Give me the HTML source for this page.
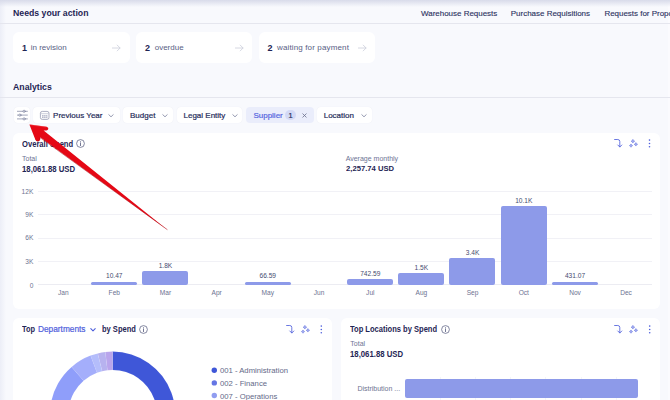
<!DOCTYPE html>
<html>
<head>
<meta charset="utf-8">
<title>Analytics</title>
<style>
*{box-sizing:border-box;margin:0;padding:0}
html,body{width:670px;height:400px;overflow:hidden}
body{position:relative;background:#f8f9fd;font-family:"Liberation Sans",sans-serif;color:#1f2554}
.a{position:absolute}
.t{position:absolute;white-space:nowrap;line-height:12px;height:12px}
.card{position:absolute;background:#fff;border-radius:6px}
.hd{font-weight:bold;font-size:9px;color:#1f2554}
.nav{font-size:8px;color:#2b3160;letter-spacing:-.02px;-webkit-text-stroke-width:.12px}
.num{font-weight:bold;font-size:9px;color:#1f2554}
.lbl{font-size:8px;color:#585e84}
.flt{position:absolute;top:107px;height:16px;background:#fff;border-radius:4px;box-shadow:0 0 1px rgba(60,70,130,.10)}
.ft{font-size:8px;color:#262c5a;top:109.5px;-webkit-text-stroke-width:.2px}
.ax{font-size:6.6px;color:#6d7391}
.vl{font-size:6.6px;color:#454b70}
.bar{position:absolute;background:#8d9ae9;border-radius:2px}
.gl{position:absolute;left:38px;width:613.5px;height:1px;background:#f1f1f6}
svg{position:absolute;overflow:visible}
</style>
</head>
<body>
<!-- edge shading -->
<div class="a" style="left:0;top:0;width:6px;height:400px;background:linear-gradient(90deg,#eceef7,#f8f9fd)"></div>
<div class="a" style="left:668px;top:0;width:2px;height:400px;background:#fbfbfe"></div>
<div class="a" style="left:0;top:0;width:670px;height:7px;background:linear-gradient(180deg,#d8dbea,rgba(248,249,253,0))"></div>

<!-- header -->
<div class="t hd" id="needs" style="left:13px;top:7.1px;font-size:9.4px;transform-origin:0 50%;transform:scaleX(.929)">Needs your action</div>
<div class="t nav" id="nav1" style="left:421px;top:7.9px">Warehouse Requests</div>
<div class="t nav" id="nav2" style="left:510.8px;top:7.9px">Purchase Requisitions</div>
<div class="t nav" id="nav3" style="left:604.4px;top:7.9px">Requests for Proposals</div>
<div class="a" style="left:0;top:23px;width:670px;height:1px;background:#e5e6ee"></div>

<!-- action cards -->
<div class="card" style="left:13px;top:32.4px;width:116.5px;height:30.8px"></div>
<div class="card" style="left:135.8px;top:32.4px;width:116.3px;height:30.8px"></div>
<div class="card" style="left:258.5px;top:32.4px;width:116.2px;height:30.8px"></div>
<div class="t num" id="n1" style="left:22px;top:41.7px">1</div>
<div class="t lbl" id="l1" style="left:30.7px;top:42.1px">in revision</div>
<div class="t num" id="n2" style="left:145px;top:41.7px">2</div>
<div class="t lbl" id="l2" style="left:154.7px;top:42.1px">overdue</div>
<div class="t num" id="n3" style="left:267.5px;top:41.7px">2</div>
<div class="t lbl" id="l3" style="left:277px;top:42.1px;letter-spacing:.14px">waiting for payment</div>
<svg style="left:112px;top:43.6px" width="10" height="8" viewBox="0 0 10 8"><path d="M0.4 4H8M5.2 1.1L8.1 4L5.2 6.9" fill="none" stroke="#cbcedb" stroke-width="0.8" stroke-linecap="round" stroke-linejoin="round"/></svg>
<svg style="left:234.5px;top:43.6px" width="10" height="8" viewBox="0 0 10 8"><path d="M0.4 4H8M5.2 1.1L8.1 4L5.2 6.9" fill="none" stroke="#cbcedb" stroke-width="0.8" stroke-linecap="round" stroke-linejoin="round"/></svg>
<svg style="left:357.8px;top:43.6px" width="10" height="8" viewBox="0 0 10 8"><path d="M0.4 4H8M5.2 1.1L8.1 4L5.2 6.9" fill="none" stroke="#cbcedb" stroke-width="0.8" stroke-linecap="round" stroke-linejoin="round"/></svg>

<!-- analytics -->
<div class="t hd" id="analytics" style="left:13.3px;top:81.4px;font-size:9.4px;transform-origin:0 50%;transform:scaleX(.931)">Analytics</div>
<div class="a" style="left:0;top:97px;width:670px;height:1px;background:#e5e6ee"></div>

<!-- filters -->
<div class="flt" style="left:13.5px;width:16.5px"></div>
<svg style="left:16.6px;top:110.2px" width="11" height="10" viewBox="0 0 11 10"><g fill="none" stroke="#7a7f9c" stroke-width="0.7" stroke-linecap="round"><path d="M0.4 1.3H5.9M8.3 1.3H10.4M0.4 5.1H1.7M4.1 5.1H10.4M0.4 8.9H5.9M8.3 8.9H10.4"/><circle cx="7.1" cy="1.3" r="1.1"/><circle cx="2.9" cy="5.1" r="1.1"/><circle cx="7.1" cy="8.9" r="1.1"/></g></svg>

<div class="flt" style="left:33px;width:86.5px"></div>
<svg style="left:40.2px;top:111px" width="9.4" height="8.8" viewBox="0 0 9.4 8.8"><rect x="0.4" y="0.4" width="8.6" height="8" rx="1.9" fill="#fff" stroke="#8f94ad" stroke-width="0.75"/><path d="M0.6 2.7H8.8" stroke="#b9bccd" stroke-width="0.7"/><path d="M2 4.1H7.4V7.1H2Z" fill="#b3b6c9"/><path d="M3.7 4V7.2M5.7 4V7.2M1.9 5.6H7.5" stroke="#fff" stroke-width="0.45"/></svg>
<div class="t ft" id="f1" style="left:53.1px">Previous Year</div>
<svg style="left:108px;top:114px" width="6" height="4" viewBox="0 0 6 4"><path d="M0.8 0.7L3 2.8L5.2 0.7" fill="none" stroke="#8a8fa8" stroke-width="0.9" stroke-linecap="round" stroke-linejoin="round"/></svg>

<div class="flt" style="left:123px;width:50px"></div>
<div class="t ft" id="f2" style="left:130px">Budget</div>
<svg style="left:162px;top:114px" width="6" height="4" viewBox="0 0 6 4"><path d="M0.8 0.7L3 2.8L5.2 0.7" fill="none" stroke="#8a8fa8" stroke-width="0.9" stroke-linecap="round" stroke-linejoin="round"/></svg>

<div class="flt" style="left:176.7px;width:65.3px"></div>
<div class="t ft" id="f3" style="left:183.5px">Legal Entity</div>
<svg style="left:231.7px;top:114px" width="6" height="4" viewBox="0 0 6 4"><path d="M0.8 0.7L3 2.8L5.2 0.7" fill="none" stroke="#8a8fa8" stroke-width="0.9" stroke-linecap="round" stroke-linejoin="round"/></svg>

<div class="flt" style="left:246px;width:68px;background:#eaedfb;box-shadow:none"></div>
<div class="t ft" id="f4" style="left:253.4px;color:#5566df">Supplier</div>
<div class="a" style="left:285.3px;top:110px;width:10.5px;height:10px;border-radius:5px;background:#d3d9f6"></div>
<div class="t ft" id="f4b" style="left:288.6px;font-size:7.4px;color:#2b3160">1</div>
<svg style="left:301.7px;top:112.5px" width="5" height="5" viewBox="0 0 5 5"><path d="M0.8 0.8L4.2 4.2M4.2 0.8L0.8 4.2" fill="none" stroke="#6a6f8c" stroke-width="0.8" stroke-linecap="round"/></svg>

<div class="flt" style="left:316.8px;width:55px"></div>
<div class="t ft" id="f5" style="left:323.7px">Location</div>
<svg style="left:360.5px;top:114px" width="6" height="4" viewBox="0 0 6 4"><path d="M0.8 0.7L3 2.8L5.2 0.7" fill="none" stroke="#8a8fa8" stroke-width="0.9" stroke-linecap="round" stroke-linejoin="round"/></svg>

<!-- main chart card -->
<div class="card" style="left:13px;top:133px;width:647px;height:175.5px"></div>
<div class="t hd" id="overall" style="left:22px;top:137.7px;font-size:8.5px;transform-origin:0 50%;transform:scaleX(.895)">Overall Spend</div>
<svg style="left:76.2px;top:139px" width="9" height="9" viewBox="0 0 9 9"><circle cx="4.5" cy="4.5" r="3.9" fill="none" stroke="#50567a" stroke-width="0.7"/><path d="M4.5 4V6.6" stroke="#50567a" stroke-width="0.8" stroke-linecap="round"/><circle cx="4.5" cy="2.7" r="0.5" fill="#50567a"/></svg>
<div class="t lbl" id="total" style="left:22px;top:152.5px;font-size:7px;color:#6e7394">Total</div>
<div class="t num" id="totalv" style="left:22px;top:162.5px;font-size:8.3px;transform-origin:0 50%;transform:scaleX(.935)">18,061.88 USD</div>
<div class="t lbl" id="avg" style="left:345.7px;top:152.6px;font-size:7px;color:#6e7394">Average monthly</div>
<div class="t num" id="avgv" style="left:345.7px;top:162.6px;font-size:8.1px;transform-origin:0 50%;transform:scaleX(.945)">2,257.74 USD</div>

<!-- card icons (main) -->
<svg class="ic" style="left:613.5px;top:139px" width="38" height="10" viewBox="0 0 38 10"><g fill="none" stroke="#4f60dc" stroke-width="0.85" stroke-linecap="round" stroke-linejoin="round"><path d="M0.6 0.5H3.8Q5.8 0.5 5.8 2.5V7.9M3.8 6L5.8 8L7.8 6"/></g><g fill="#4f60dc" fill-opacity=".4" stroke="#4f60dc" stroke-width="0.5" stroke-linejoin="round"><path d="M18.90 0.35L19.42 1.68L20.75 2.20L19.42 2.72L18.90 4.05L18.38 2.72L17.05 2.20L18.38 1.68Z"/><path d="M17.00 4.95L17.47 6.13L18.65 6.60L17.47 7.07L17.00 8.25L16.53 7.07L15.35 6.60L16.53 6.13Z"/><path d="M21.90 3.55L22.39 4.81L23.65 5.30L22.39 5.79L21.90 7.05L21.41 5.79L20.15 5.30L21.41 4.81Z"/></g><g fill="#4f60dc"><circle cx="35.5" cy="1.1" r="0.8"/><circle cx="35.5" cy="4.5" r="0.8"/><circle cx="35.5" cy="7.8" r="0.8"/></g></svg>

<!-- grid -->
<div class="gl" style="top:191px"></div>
<div class="gl" style="top:214.4px"></div>
<div class="gl" style="top:237.7px"></div>
<div class="gl" style="top:261px"></div>
<div class="gl" style="top:284px;background:#ececf2"></div>
<div class="t ax" id="y12" style="right:636.7px;top:185.5px">12K</div>
<div class="t ax" id="y9" style="right:636.7px;top:208.7px">9K</div>
<div class="t ax" id="y6" style="right:636.7px;top:232.2px">6K</div>
<div class="t ax" id="y3" style="right:636.7px;top:255.5px">3K</div>
<div class="t ax" id="y0" style="right:636.7px;top:279.6px">0</div>

<!-- bars -->
<div class="bar" style="left:91.0px;top:281.5px;width:46px;height:3.4px;border-radius:1.7px"></div>
<div class="bar" style="left:142.2px;top:270.8px;width:46px;height:14.2px"></div>
<div class="bar" style="left:244.5px;top:281.5px;width:46px;height:3.4px;border-radius:1.7px"></div>
<div class="bar" style="left:347.0px;top:279px;width:46px;height:6px"></div>
<div class="bar" style="left:398.1px;top:273px;width:46px;height:12px"></div>
<div class="bar" style="left:449.3px;top:257.8px;width:46px;height:27.2px"></div>
<div class="bar" style="left:500.5px;top:206px;width:46px;height:79px"></div>
<div class="bar" style="left:551.7px;top:281.5px;width:46px;height:3.4px;border-radius:1.7px"></div>

<!-- bar labels -->
<div class="t vl" style="left:89.3px;width:50px;text-align:center;top:270.3px">10.47</div>
<div class="t vl" style="left:140.5px;width:50px;text-align:center;top:260.1px">1.8K</div>
<div class="t vl" style="left:242.8px;width:50px;text-align:center;top:270.3px">66.59</div>
<div class="t vl" style="left:345.3px;width:50px;text-align:center;top:268.2px">742.59</div>
<div class="t vl" style="left:396.4px;width:50px;text-align:center;top:262.2px">1.5K</div>
<div class="t vl" style="left:447.6px;width:50px;text-align:center;top:247.0px">3.4K</div>
<div class="t vl" style="left:498.8px;width:50px;text-align:center;top:195.0px">10.1K</div>
<div class="t vl" style="left:550px;width:50px;text-align:center;top:270.3px">431.07</div>

<!-- month labels -->
<div class="t ax" style="left:38.3px;width:50px;text-align:center;top:286.8px">Jan</div>
<div class="t ax" style="left:89.3px;width:50px;text-align:center;top:286.8px">Feb</div>
<div class="t ax" style="left:140.5px;width:50px;text-align:center;top:286.8px">Mar</div>
<div class="t ax" style="left:191.7px;width:50px;text-align:center;top:286.8px">Apr</div>
<div class="t ax" style="left:242.8px;width:50px;text-align:center;top:286.8px">May</div>
<div class="t ax" style="left:294px;width:50px;text-align:center;top:286.8px">Jun</div>
<div class="t ax" style="left:345.3px;width:50px;text-align:center;top:286.8px">Jul</div>
<div class="t ax" style="left:396.4px;width:50px;text-align:center;top:286.8px">Aug</div>
<div class="t ax" style="left:447.6px;width:50px;text-align:center;top:286.8px">Sep</div>
<div class="t ax" style="left:498.8px;width:50px;text-align:center;top:286.8px">Oct</div>
<div class="t ax" style="left:550px;width:50px;text-align:center;top:286.8px">Nov</div>
<div class="t ax" style="left:601px;width:50px;text-align:center;top:286.8px">Dec</div>

<!-- bottom-left card -->
<div class="card" style="left:13px;top:318.3px;width:319px;height:90px"></div>
<div class="t hd" id="top1" style="left:22.3px;top:323.3px;font-size:8.5px;transform-origin:0 50%;transform:scaleX(.87)">Top</div>
<div class="t" id="dept" style="-webkit-text-stroke:.2px #4f60dc;left:38px;top:323.3px;font-size:8.3px;color:#4f60dc">Departments</div>
<svg style="left:89.7px;top:327.5px" width="6" height="4" viewBox="0 0 6 4"><path d="M0.8 0.7L3 2.8L5.2 0.7" fill="none" stroke="#4f60dc" stroke-width="1.1" stroke-linecap="round" stroke-linejoin="round"/></svg>
<div class="t hd" id="bysp" style="left:101.5px;top:323.3px;font-size:8.5px;transform-origin:0 50%;transform:scaleX(.885)">by Spend</div>
<svg style="left:139.2px;top:324.5px" width="9" height="9" viewBox="0 0 9 9"><circle cx="4.5" cy="4.5" r="3.9" fill="none" stroke="#50567a" stroke-width="0.7"/><path d="M4.5 4V6.6" stroke="#50567a" stroke-width="0.8" stroke-linecap="round"/><circle cx="4.5" cy="2.7" r="0.5" fill="#50567a"/></svg>
<svg class="ic" style="left:285.8px;top:324.6px" width="38" height="10" viewBox="0 0 38 10"><g fill="none" stroke="#4f60dc" stroke-width="0.85" stroke-linecap="round" stroke-linejoin="round"><path d="M0.6 0.5H3.8Q5.8 0.5 5.8 2.5V7.9M3.8 6L5.8 8L7.8 6"/></g><g fill="#4f60dc" fill-opacity=".4" stroke="#4f60dc" stroke-width="0.5" stroke-linejoin="round"><path d="M18.90 0.35L19.42 1.68L20.75 2.20L19.42 2.72L18.90 4.05L18.38 2.72L17.05 2.20L18.38 1.68Z"/><path d="M17.00 4.95L17.47 6.13L18.65 6.60L17.47 7.07L17.00 8.25L16.53 7.07L15.35 6.60L16.53 6.13Z"/><path d="M21.90 3.55L22.39 4.81L23.65 5.30L22.39 5.79L21.90 7.05L21.41 5.79L20.15 5.30L21.41 4.81Z"/></g><g fill="#4f60dc"><circle cx="35.3" cy="1.1" r="0.8"/><circle cx="35.3" cy="4.5" r="0.8"/><circle cx="35.3" cy="7.8" r="0.8"/></g></svg>

<!-- donut -->
<svg id="donut" style="left:0;top:0" width="670" height="400" viewBox="0 0 670 400">
<path d="M112.60 351.60A62.6 62.6 0 0 1 152.84 462.15L141.08 448.14A44.3 44.3 0 0 0 112.60 369.90Z" fill="#3f57d8" stroke="#fff" stroke-opacity=".12" stroke-width=".4"/>
<path d="M105.30 352.03A62.6 62.6 0 0 1 112.60 351.60L112.60 369.90A44.3 44.3 0 0 0 107.43 370.20Z" fill="#b9a5ec" stroke="#fff" stroke-opacity=".12" stroke-width=".4"/>
<path d="M97.77 353.38A62.6 62.6 0 0 1 105.30 352.03L107.43 370.20A44.3 44.3 0 0 0 102.11 371.16Z" fill="#b7b2ef" stroke="#fff" stroke-opacity=".12" stroke-width=".4"/>
<path d="M90.57 355.60A62.6 62.6 0 0 1 97.77 353.38L102.11 371.16A44.3 44.3 0 0 0 97.01 372.73Z" fill="#b4bdfb" stroke="#fff" stroke-opacity=".12" stroke-width=".4"/>
<path d="M71.61 366.88A62.6 62.6 0 0 1 90.57 355.60L97.01 372.73A44.3 44.3 0 0 0 83.59 380.72Z" fill="#a4aefb" stroke="#fff" stroke-opacity=".12" stroke-width=".4"/>
<path d="M58.39 445.50A62.6 62.6 0 0 1 71.61 366.88L83.59 380.72A44.3 44.3 0 0 0 74.24 436.35Z" fill="#8f9efa" stroke="#fff" stroke-opacity=".12" stroke-width=".4"/>
</svg>

<!-- legend -->
<svg style="left:0;top:0" width="670" height="400" viewBox="0 0 670 400"><circle cx="214.3" cy="370.3" r="2.7" fill="#3f57d8"/><circle cx="214.3" cy="382.9" r="2.7" fill="#6576e4"/><circle cx="214.3" cy="395.5" r="2.7" fill="#909df0"/></svg>
<div class="t lbl" id="lg1" style="left:220px;top:365.3px;color:#636988;font-size:7.7px">001 - Administration</div>
<div class="t lbl" id="lg2" style="left:220px;top:377.9px;color:#636988;font-size:7.7px">002 - Finance</div>
<div class="t lbl" id="lg3" style="left:220px;top:390.5px;color:#636988;font-size:7.7px">007 - Operations</div>

<!-- bottom-right card -->
<div class="card" style="left:341px;top:318.3px;width:319px;height:90px"></div>
<div class="t hd" id="toploc" style="left:350.3px;top:323.3px;font-size:8.5px;transform-origin:0 50%;transform:scaleX(.888)">Top Locations by Spend</div>
<svg style="left:441.3px;top:324.5px" width="9" height="9" viewBox="0 0 9 9"><circle cx="4.5" cy="4.5" r="3.9" fill="none" stroke="#50567a" stroke-width="0.7"/><path d="M4.5 4V6.6" stroke="#50567a" stroke-width="0.8" stroke-linecap="round"/><circle cx="4.5" cy="2.7" r="0.5" fill="#50567a"/></svg>
<div class="t lbl" id="total2" style="left:350.3px;top:338.3px;font-size:7px;color:#6e7394">Total</div>
<div class="t num" id="totalv2" style="left:350.3px;top:347.9px;font-size:8.3px;transform-origin:0 50%;transform:scaleX(.935)">18,061.88 USD</div>
<svg class="ic" style="left:614px;top:324.5px" width="38" height="10" viewBox="0 0 38 10"><g fill="none" stroke="#4f60dc" stroke-width="0.85" stroke-linecap="round" stroke-linejoin="round"><path d="M0.6 0.5H3.8Q5.8 0.5 5.8 2.5V7.9M3.8 6L5.8 8L7.8 6"/></g><g fill="#4f60dc" fill-opacity=".4" stroke="#4f60dc" stroke-width="0.5" stroke-linejoin="round"><path d="M18.90 0.35L19.42 1.68L20.75 2.20L19.42 2.72L18.90 4.05L18.38 2.72L17.05 2.20L18.38 1.68Z"/><path d="M17.00 4.95L17.47 6.13L18.65 6.60L17.47 7.07L17.00 8.25L16.53 7.07L15.35 6.60L16.53 6.13Z"/><path d="M21.90 3.55L22.39 4.81L23.65 5.30L22.39 5.79L21.90 7.05L21.41 5.79L20.15 5.30L21.41 4.81Z"/></g><g fill="#4f60dc"><circle cx="35.7" cy="1.1" r="0.8"/><circle cx="35.7" cy="4.5" r="0.8"/><circle cx="35.7" cy="7.8" r="0.8"/></g></svg>
<div class="a" style="left:439.5px;top:377px;width:1px;height:23px;background:#f4f5f9"></div>
<div class="a" style="left:474.8px;top:377px;width:1px;height:23px;background:#f4f5f9"></div>
<div class="a" style="left:510.1px;top:377px;width:1px;height:23px;background:#f4f5f9"></div>
<div class="a" style="left:545.4px;top:377px;width:1px;height:23px;background:#f4f5f9"></div>
<div class="a" style="left:580.7px;top:377px;width:1px;height:23px;background:#f4f5f9"></div>
<div class="a" style="left:616.0px;top:377px;width:1px;height:23px;background:#f4f5f9"></div>
<div class="bar" style="left:404.7px;top:379px;width:233px;height:18.5px;border-radius:2px"></div>
<div class="t ax" id="dist" style="left:357.4px;top:383.3px;font-size:7px">Distribution ...</div>

<!-- red arrow -->
<svg id="arrow" style="left:0;top:0" width="670" height="400" viewBox="0 0 670 400">
<path d="M29.4 124.4 L46.6 126.7 Q48.8 127.6 48.3 129 Q47.8 130.4 46.4 130.5 L43.6 130.6 L167.6 229.9 L40.2 137.3 L40 139.4 Q39.6 141.4 37.6 141.3 Q36 141 35.2 139.2 Z" fill="#e50815"/>
<path d="M35.4 139.4 Q36.2 141 37.6 141.1 Q39.4 141.2 39.8 139.4 L40.1 137.6 L167.4 229.7" fill="none" stroke="#a8000a" stroke-opacity=".55" stroke-width=".9" stroke-linejoin="round"/>
<path d="M30.2 124.9 L46.4 127.1" fill="none" stroke="#ff4a50" stroke-opacity=".5" stroke-width=".8"/>
</svg>

</body>
</html>
